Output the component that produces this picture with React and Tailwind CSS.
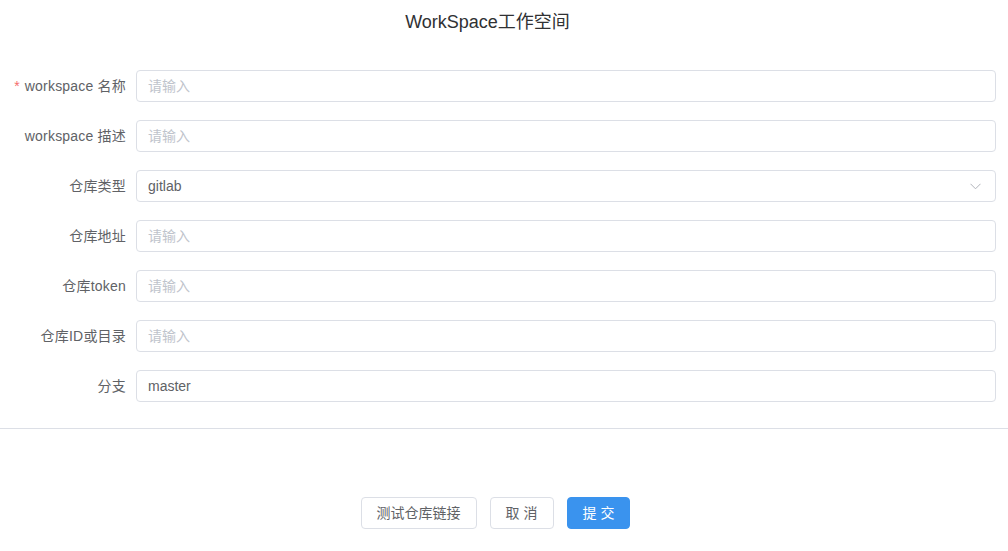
import React, { useState } from 'react';

const fields = [
  { label: 'workspace 名称', required: true, value: '', placeholder: '请输入' },
  { label: 'workspace 描述', value: '', placeholder: '请输入' },
  { label: '仓库类型', value: 'gitlab', select: true },
  { label: '仓库地址', value: '', placeholder: '请输入' },
  { label: '仓库token', value: '', placeholder: '请输入' },
  { label: '仓库ID或目录', value: '', placeholder: '请输入' },
  { label: '分支', value: 'master', placeholder: '请输入' },
];

const font = { fontFamily: '"Liberation Sans", "Noto Sans CJK SC", sans-serif' };

const App = () => {
  const [values, setValues] = useState(fields.map((f) => f.value));

  const update = (i, v) => {
    const next = [...values];
    next[i] = v;
    setValues(next);
  };

  return (
    <div className="min-h-screen bg-white text-[#606266]" style={font}>
      {/* header */}
      <div className="pt-[10px] pr-[33px] text-center text-[18px] leading-[24px] text-[#303133]">
        WorkSpace工作空间
      </div>

      {/* form */}
      <div className="mt-[36px] pr-[12px] flex flex-col gap-[18px]">
        {fields.map((field, i) => (
          <div key={field.label} className="flex items-center">
            <label className="w-[136px] shrink-0 pr-[10px] text-right text-[14px] leading-[32px] tracking-[0.2px]">
              {field.required && <span className="text-[#f56c6c] mr-[5px]">*</span>}
              {field.label}
            </label>
            <div className="relative flex-1">
              <input
                className="w-full h-[32px] rounded-[4px] border border-[#dcdfe6] bg-white px-[11px] text-[14px] text-[#606266] placeholder:text-[#c0c4cc] outline-none"
                style={font}
                value={values[i]}
                placeholder={field.placeholder}
                readOnly={field.select}
                onChange={(e) => update(i, e.target.value)}
              />
              {field.select && (
                <svg
                  className="absolute right-[15px] top-[13px]"
                  width="11"
                  height="7"
                  viewBox="0 0 11 7"
                  fill="none"
                >
                  <path d="M0.5 0.8 L5.5 5.8 L10.5 0.8" stroke="#b0b3ba" strokeWidth="1" />
                </svg>
              )}
            </div>
          </div>
        ))}
      </div>

      {/* divider */}
      <div className="mt-[26px] border-t border-[#dcdfe6]" />

      {/* footer */}
      <div className="mt-[68px] flex justify-center gap-[13px] pr-[17px]">
        <button className="h-[32px] px-[15px] rounded-[4px] border border-[#dcdfe6] bg-white text-[14px] text-[#606266]" style={font}>
          测试仓库链接
        </button>
        <button className="h-[32px] px-[15px] rounded-[4px] border border-[#dcdfe6] bg-white text-[14px] text-[#606266]" style={font}>
          取 消
        </button>
        <button className="h-[32px] px-[15px] rounded-[4px] border border-[#3a93ee] bg-[#3a93ee] text-[14px] text-white" style={font}>
          提 交
        </button>
      </div>
    </div>
  );
};

export default App;
